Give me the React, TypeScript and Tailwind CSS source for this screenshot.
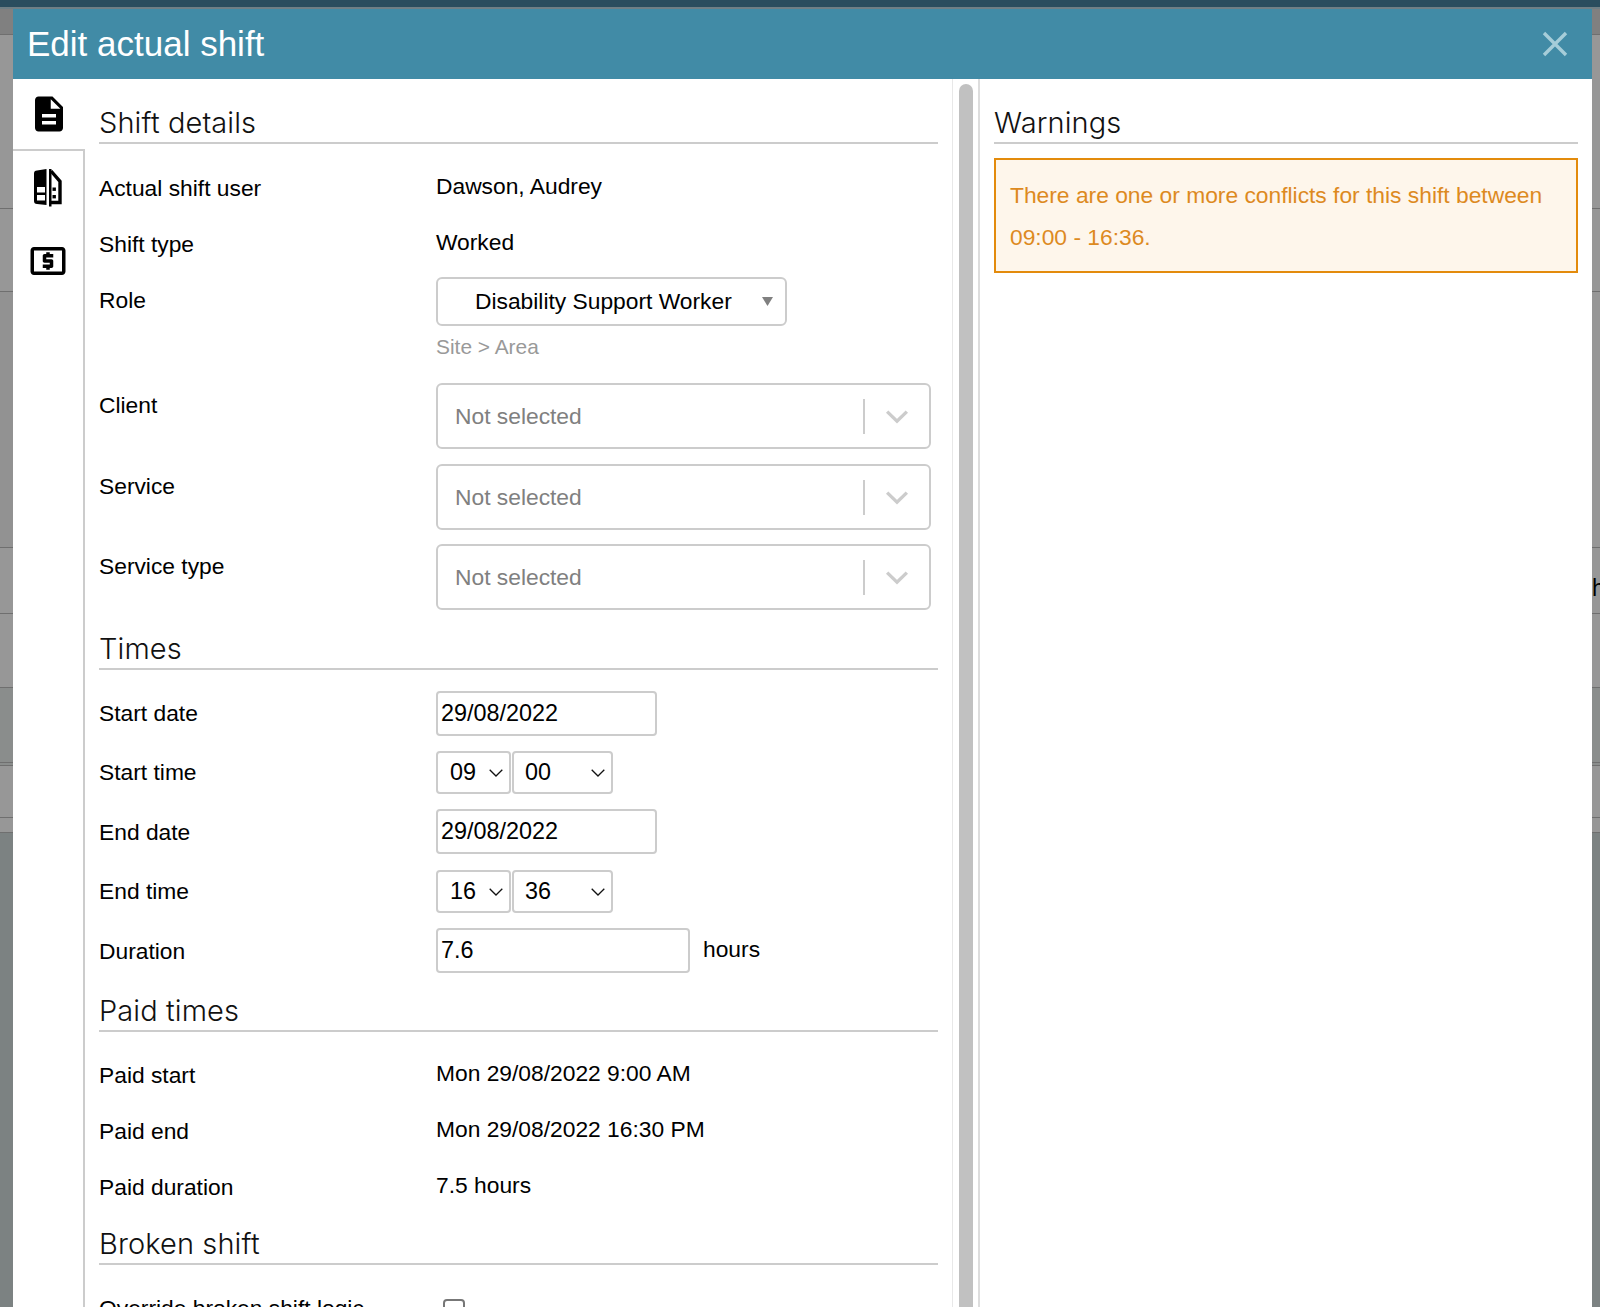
import React from "react";
import { MdDescription, MdLocalAtm } from "react-icons/md";

const sans = "font-['Liberation_Sans',Arial,sans-serif]";

const Heading = ({ children, className = "" }: { children: React.ReactNode; className?: string }) => (
  <div className={`h-[38px] border-b-2 border-[#cccccc] font-['Inter',sans-serif] font-light text-[29px] tracking-[0.1px] text-[#111] leading-[34px] ${className}`}>
    {children}
  </div>
);

const Row = ({ label, h, children }: { label: string; h: string; children?: React.ReactNode }) => (
  <div className={`grid grid-cols-[337px_1fr] items-start ${h}`}>
    <div className="text-[22.8px] text-black leading-[28px]">{label}</div>
    <div>{children}</div>
  </div>
);

const Value = ({ children }: { children: React.ReactNode }) => (
  <div className="text-[22.8px] leading-[28px] -mt-[2px] text-black">{children}</div>
);

const Combo = () => (
  <div className="-mt-[8px] h-[66px] w-[495px] rounded-[6px] border-2 border-[#cccccc] flex items-center pl-[17px] text-[22.8px] text-[#808080]">
    <span className="flex-1">Not selected</span>
    <span className="h-[35px] w-[2px] bg-[#cccccc]" />
    <svg width="24" height="24" viewBox="0 0 20 20" className="ml-[20px] mr-[20px] mt-[2px]">
      <path d="M1.8 5.5 L10 13.5 L18.2 5.5" fill="none" stroke="#cccccc" strokeWidth="2.8" />
    </svg>
  </div>
);

const Input = ({ value, w, top }: { value: string; w: string; top: string }) => (
  <div className={`${w} ${top} h-[45px] rounded-[4px] border-2 border-[#cccccc] flex items-center pl-[3px] text-[23.4px] text-black`}>{value}</div>
);

const TimeSelect = ({ value, w, textCls }: { value: string; w: string; textCls: string }) => (
  <div className={`${w} h-[43px] rounded-[4px] border-2 border-[#cccccc] flex items-center justify-between text-[23.4px] text-black`}>
    <span className={textCls}>{value}</span>
    <svg width="14" height="8" viewBox="0 0 14 8" className="mr-[6px]">
      <path d="M0.7 0.8 L7 7 L13.3 0.8" fill="none" stroke="#111" strokeWidth="1.3" />
    </svg>
  </div>
);

const TimeRow = ({ h, m }: { h: string; m: string }) => (
  <div className="-mt-[7px] flex gap-[1px]">
    <TimeSelect value={h} w="w-[75px]" textCls="pl-[12px]" />
    <TimeSelect value={m} w="w-[101px]" textCls="pl-[11px]" />
  </div>
);

const Band = ({ h, c, children }: { h: string; c: string; children?: React.ReactNode }) => (
  <div className={`${h} ${c} border-b border-[#6f6f6f] shrink-0 overflow-hidden`}>{children}</div>
);

const Strip = ({ second, glyph }: { second: string; glyph?: boolean }) => (
  <div className="flex flex-col h-full">
    <Band h="h-[26px]" c="bg-[#808080]" />
    <Band h="h-[174px]" c="bg-[#979797]" />
    <Band h="h-[83px]" c="bg-[#979797]" />
    <Band h="h-[256px]" c={second} />
    <Band h="h-[66px]" c="bg-[#979797]">
      {glyph && <div className="mt-[26px] text-[23px] leading-[28px] text-black">h</div>}
    </Band>
    <Band h="h-[74px]" c="bg-[#979797]" />
    <Band h="h-[75px]" c="bg-[#8a8d8c]" />
    <Band h="h-[3px]" c="bg-[#8a8d8c]" />
    <Band h="h-[52px]" c="bg-[#979797]" />
    <Band h="h-[15px]" c="bg-[#979797]" />
    <div className="flex-1 bg-[#7c8282]" />
  </div>
);

const SplitIcon = () => (
  <svg width="50" height="50" viewBox="0 0 50 50">
    <path
      fillRule="evenodd"
      d="M12 7.5 L21.5 6 V42 L12 41 Q9 41 9 38 V10.5 Q9 7.5 12 7.5 Z M12 24 V29.5 H20 V24 Z M12 32 V37.5 H20 V32 Z"
      fill="#000"
    />
    <path d="M24 6 H26.5 V43.5 H24 Z" fill="#000" />
    <path d="M26 8 L35 18.5 V39.5 H26" fill="none" stroke="#000" strokeWidth="3.4" />
    <rect x="27.5" y="24.5" width="3.4" height="3.4" fill="#000" />
    <rect x="27.5" y="32" width="3.4" height="3.4" fill="#000" />
  </svg>
);

export default function App() {
  return (
    <div className={`h-[1307px] w-[1600px] overflow-hidden flex flex-col bg-[#7c8282] ${sans}`}>
      <div className="h-[9px] shrink-0 bg-[#2a4d5e] border-b-2 border-[#6f7f85]" />
      <div className="flex flex-1 min-h-0">
        <div className="w-[13px] shrink-0"><Strip second="bg-[#929292]" /></div>
        <div className="w-[1579px] shrink-0 flex flex-col bg-white overflow-hidden">
          <div className="h-[70px] shrink-0 bg-[#418ba6] flex items-center justify-between pl-[14px] pr-[24px]">
            <span className="text-[35px] text-white leading-none -mt-[2px]">Edit actual shift</span>
            <svg width="26" height="26" viewBox="0 0 26 26">
              <path d="M2 2 L24 24 M24 2 L2 24" stroke="#a6cdd9" strokeWidth="3.4" fill="none" />
            </svg>
          </div>
          <div className="flex flex-1 min-h-0">
            <div className="w-[72px] shrink-0 flex flex-col">
              <div className="h-[72px] shrink-0 flex justify-center pt-[14px] border-b-2 border-[#cccccc] pr-[1px]">
                <MdDescription size={42} color="#000" />
              </div>
              <div className="flex-1 flex flex-col border-r-2 border-[#cccccc]">
                <div className="h-[78px] pt-[12px] pl-[12px]"><SplitIcon /></div>
                <div className="flex justify-center -ml-[1px] pt-[11px]"><MdLocalAtm size={42} color="#000" /></div>
              </div>
            </div>
            <div className="w-[868px] shrink-0 pl-[14px] pr-[14px] border-r border-[#e8e8e8]">
              <Heading className="mt-[27px]">Shift details</Heading>
              <div className="mt-[30px]">
                <Row label="Actual shift user" h="h-[56px]"><Value>Dawson, Audrey</Value></Row>
                <Row label="Shift type" h="h-[56px]"><Value>Worked</Value></Row>
                <Row label="Role" h="h-[105px]">
                  <div className="-mt-[9px] h-[49px] w-[351px] rounded-[6px] border-2 border-[#cccccc] flex items-center justify-between pl-[37px] pr-[12px] text-[22.8px] text-black">
                    <span>Disability Support Worker</span>
                    <svg width="11" height="9" viewBox="0 0 11 9"><path d="M0 0 H11 L5.5 9 Z" fill="#808080" /></svg>
                  </div>
                  <div className="mt-[8px] text-[20.9px] leading-[26px] text-[#999999]">Site &gt; Area</div>
                </Row>
                <Row label="Client" h="h-[81px]"><Combo /></Row>
                <Row label="Service" h="h-[80px]"><Combo /></Row>
                <Row label="Service type" h="h-[80px]"><Combo /></Row>
              </div>
              <Heading>Times</Heading>
              <div className="mt-[29px]">
                <Row label="Start date" h="h-[59px]"><Input value="29/08/2022" w="w-[221px]" top="-mt-[8px]" /></Row>
                <Row label="Start time" h="h-[60px]"><TimeRow h="09" m="00" /></Row>
                <Row label="End date" h="h-[59px]"><Input value="29/08/2022" w="w-[221px]" top="-mt-[9px]" /></Row>
                <Row label="End time" h="h-[60px]"><TimeRow h="16" m="36" /></Row>
                <Row label="Duration" h="h-[57px]">
                  <div className="flex items-start gap-[13px]">
                    <Input value="7.6" w="w-[254px]" top="-mt-[9px]" />
                    <span className="text-[22.8px] leading-[28px] -mt-[2px] text-black">hours</span>
                  </div>
                </Row>
              </div>
              <Heading>Paid times</Heading>
              <div className="mt-[29px]">
                <Row label="Paid start" h="h-[56px]"><Value>Mon 29/08/2022 9:00 AM</Value></Row>
                <Row label="Paid end" h="h-[56px]"><Value>Mon 29/08/2022 16:30 PM</Value></Row>
                <Row label="Paid duration" h="h-[54px]"><Value>7.5 hours</Value></Row>
              </div>
              <Heading>Broken shift</Heading>
              <div className="mt-[29px]">
                <Row label="Override broken shift logic" h="h-[40px]">
                  <div className="mt-[5px] ml-[7px] w-[22px] h-[22px] rounded-[4px] border-2 border-[#777777] bg-white" />
                </Row>
              </div>
            </div>
            <div className="w-[27px] shrink-0 border-r-2 border-[#dddddd] flex justify-center pt-[5px]">
              <div className="w-[14px] h-full rounded-t-[7px] bg-[#c1c1c1]" />
            </div>
            <div className="flex-1 pl-[14px] pr-[14px]">
              <Heading className="mt-[27px]">Warnings</Heading>
              <div className="mt-[14px] h-[115px] border-2 border-[#e38b0c] bg-[#fef6eb] px-[14px] py-[14px] text-[22.8px] leading-[42px] text-[#dd8a1f]">
                There are one or more conflicts for this shift between 09:00 - 16:36.
              </div>
            </div>
          </div>
        </div>
        <div className="w-[8px] shrink-0"><Strip second="bg-[#979797]" glyph /></div>
      </div>
    </div>
  );
}
